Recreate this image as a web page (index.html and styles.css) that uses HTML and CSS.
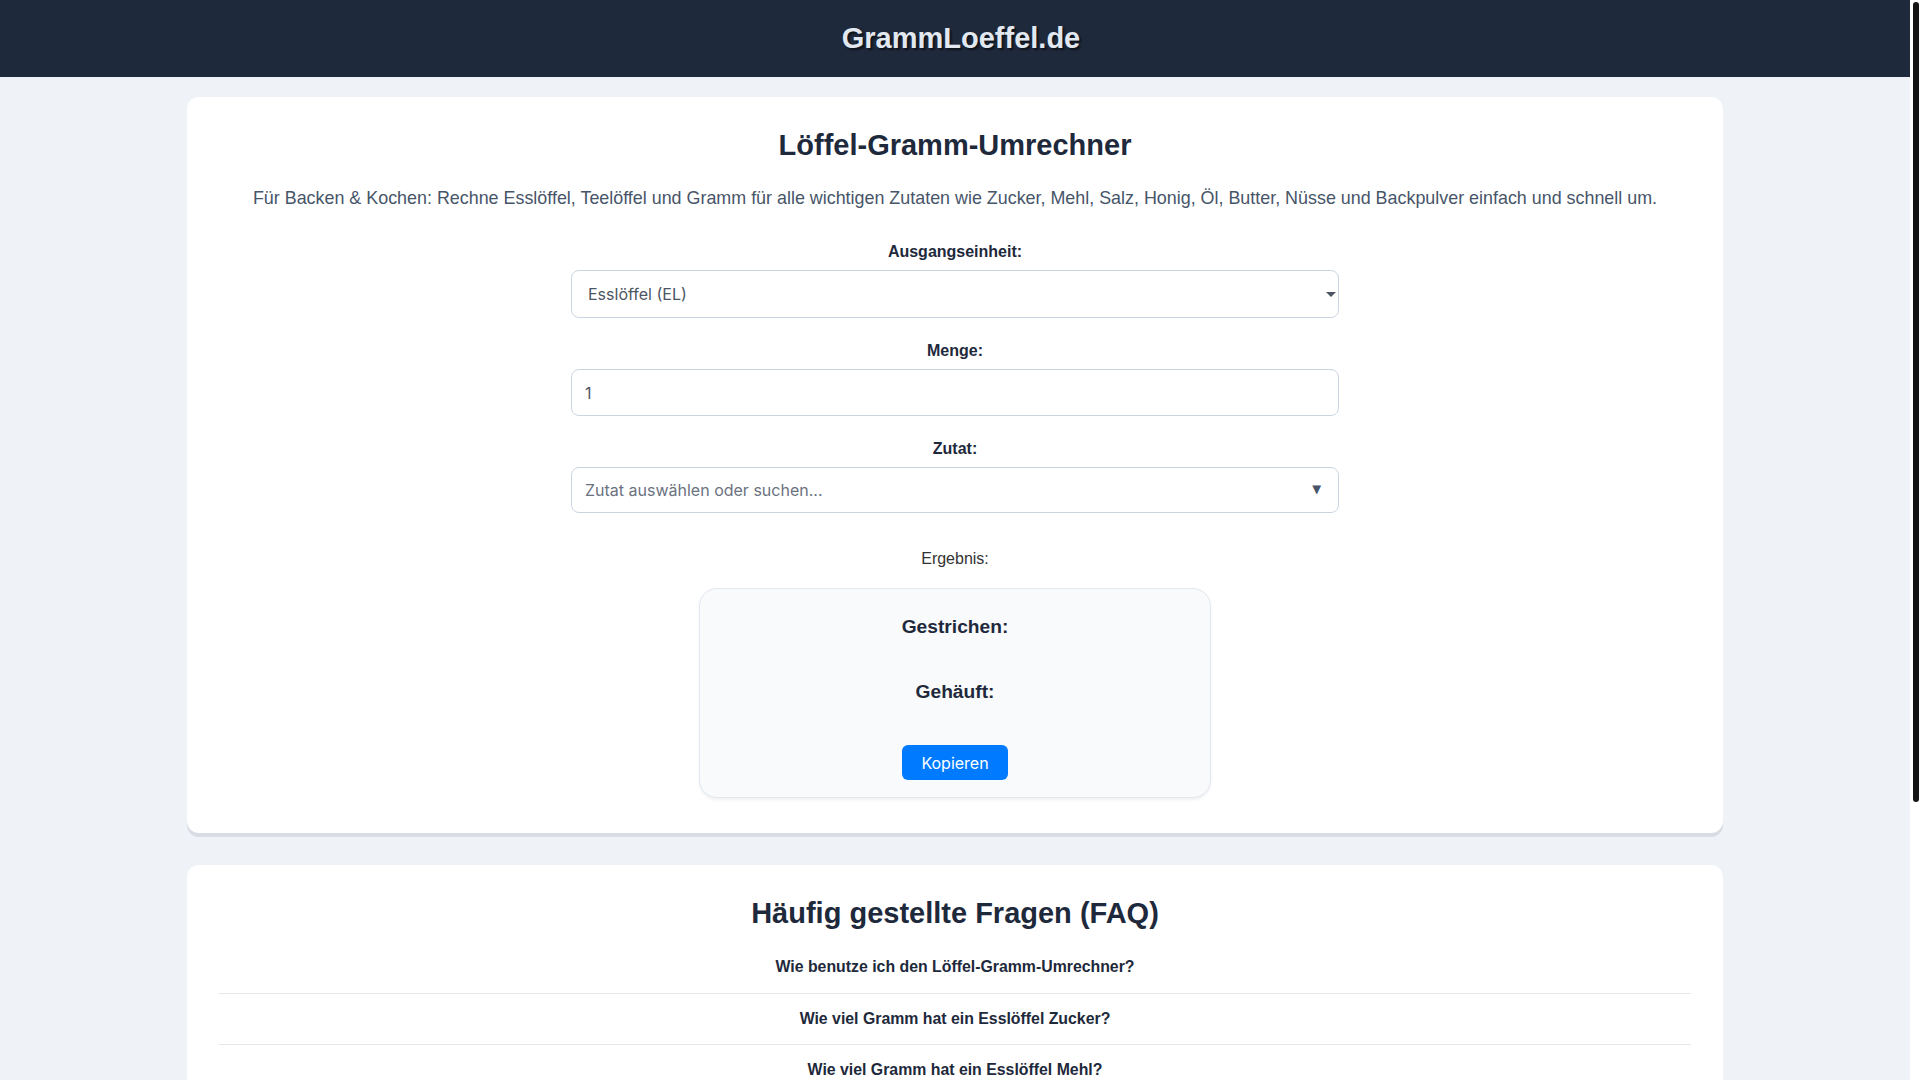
FILE: index.html
```html
<!DOCTYPE html>
<html lang="de">
<head>
<meta charset="utf-8">
<title>GrammLoeffel.de – Löffel-Gramm-Umrechner</title>
<link rel="stylesheet" href="styles.css">
</head>
<body>
<header class="site-header">
  <div class="site-title">GrammLoeffel.de</div>
</header>

<main class="container">
  <section class="card converter">
    <h1 class="card-title">Löffel-Gramm-Umrechner</h1>
    <p class="subtitle">Für Backen &amp; Kochen: Rechne Esslöffel, Teelöffel und Gramm für alle wichtigen Zutaten wie Zucker, Mehl, Salz, Honig, Öl, Butter, Nüsse und Backpulver einfach und schnell um.</p>

    <form class="form">
      <div class="group">
        <label class="label" for="unit">Ausgangseinheit:</label>
        <div class="select-wrap">
          <select id="unit" class="field field-select">
            <option>Esslöffel (EL)</option>
            <option>Teelöffel (TL)</option>
            <option>Gramm (g)</option>
          </select>
          <span class="select-arrow" aria-hidden="true"></span>
        </div>
      </div>

      <div class="group">
        <label class="label" for="amount">Menge:</label>
        <input id="amount" class="field field-input" type="text" value="1">
      </div>

      <div class="group">
        <label class="label" for="ingredient">Zutat:</label>
        <div class="combo-wrap">
          <input id="ingredient" class="field field-combo" type="text" placeholder="Zutat auswählen oder suchen...">
          <span class="combo-arrow" aria-hidden="true">▼</span>
        </div>
      </div>

      <div class="result-label">Ergebnis:</div>
      <div class="result-box">
        <div class="result-line">Gestrichen:</div>
        <div class="result-line second">Gehäuft:</div>
        <button type="button" class="copy-btn">Kopieren</button>
      </div>
    </form>
  </section>

  <section class="card faq">
    <h2 class="card-title faq-title">Häufig gestellte Fragen (FAQ)</h2>
    <details class="faq-item"><summary>Wie benutze ich den Löffel-Gramm-Umrechner?</summary></details>
    <details class="faq-item"><summary>Wie viel Gramm hat ein Esslöffel Zucker?</summary></details>
    <details class="faq-item"><summary>Wie viel Gramm hat ein Esslöffel Mehl?</summary></details>
  </section>
</main>

<div class="scrollbar" aria-hidden="true"><div class="scrollbar-thumb"></div></div>
</body>
</html>
```

FILE: styles.css
```css
html {
  background: #eff3f8;
}

body {
  margin: 0 10px 0 0;
  background: #eff3f8;
  font-family: "Liberation Sans", Arial, sans-serif;
  color: #1e293b;
}

.scrollbar {
  position: fixed;
  top: 0;
  right: 0;
  width: 10px;
  height: 100vh;
  background: #ffffff;
}

.scrollbar-thumb {
  position: absolute;
  top: 2px;
  left: 3px;
  width: 6px;
  height: 800px;
  border-radius: 3px;
  background: #141414;
}

.site-header {
  background: #1e293b;
  height: 77px;
  display: flex;
  align-items: center;
  justify-content: center;
  padding-left: 12px;
}

.site-title {
  font-size: 29px;
  font-weight: bold;
  color: #e2e8f0;
  text-shadow: 2px 2px 2px rgba(0, 0, 0, 0.55);
}

.container {
  max-width: 1536px;
  margin: 20px auto 0;
  padding-bottom: 20px;
}

.card {
  background: #ffffff;
  border-radius: 12px;
  padding: 32px 32px 35px;
  box-shadow: 0 4px 0 #d9dce2;
  margin-bottom: 32px;
}

.card-title {
  margin: 0 0 26px;
  font-size: 29px;
  font-weight: bold;
  text-align: center;
  color: #1e293b;
}

.subtitle {
  margin: 0 0 35px;
  font-size: 17.9px;
  line-height: 20.2px;
  text-align: center;
  color: #475569;
}

.form {
  max-width: 768px;
  margin: 0 auto;
}

.group {
  margin-bottom: 24px;
}

.label {
  display: block;
  font-size: 16px;
  line-height: 18px;
  font-weight: bold;
  text-align: center;
  margin-bottom: 9px;
  color: #1e293b;
}

.field {
  display: block;
  box-sizing: border-box;
  width: 100%;
  margin: 0;
  border: 1px solid #cbd5e1;
  border-radius: 8px;
  background: #ffffff;
  font-family: Inter, "Liberation Sans", sans-serif;
  font-size: 16px;
  color: #4b5563;
  outline: none;
}

.select-wrap,
.combo-wrap {
  position: relative;
}

.field-select {
  appearance: none;
  -webkit-appearance: none;
  height: 48px;
  padding: 0 30px 0 16px;
}

.select-arrow {
  position: absolute;
  right: 3px;
  top: 22px;
  width: 0;
  height: 0;
  border-left: 5px solid transparent;
  border-right: 5px solid transparent;
  border-top: 5px solid #4b5563;
}

.field-input {
  height: 47px;
  padding: 0 14px 0 13px;
}

.field-combo {
  height: 46px;
  padding: 0 40px 0 13px;
}

.field-combo::placeholder {
  color: #6b7280;
  opacity: 1;
}

.combo-arrow {
  position: absolute;
  right: 18px;
  top: 14px;
  font-family: "DejaVu Sans", sans-serif;
  font-size: 11.5px;
  line-height: 16px;
  color: #475569;
  pointer-events: none;
}

.result-label {
  margin-top: 37px;
  font-size: 16px;
  line-height: 18px;
  text-align: center;
  color: #333333;
}

.result-box {
  box-sizing: border-box;
  width: 512px;
  height: 210px;
  margin: 20px auto 0;
  padding: 27px 16px 17px;
  background: #f8fafc;
  border: 1px solid #e2e8f0;
  border-radius: 18px;
  box-shadow: 0 2px 3px rgba(0, 0, 0, 0.06);
  display: flex;
  flex-direction: column;
  align-items: center;
}

.result-line {
  font-size: 19.2px;
  line-height: 22px;
  font-weight: bold;
  color: #1e293b;
}

.result-line.second {
  margin-top: 43px;
}

.copy-btn {
  margin-top: 42px;
  height: 35px;
  padding: 0 19px;
  border: none;
  border-radius: 6px;
  background: #007bff;
  color: #ffffff;
  font-family: Inter, "Liberation Sans", sans-serif;
  font-size: 16px;
  cursor: pointer;
}

.faq-title {
  margin-bottom: 12px;
}

.faq-item {
  border-bottom: 1px solid #e5e7eb;
}

.faq-item summary {
  list-style: none;
  padding: 16px 0;
  font-size: 15.85px;
  line-height: 18.4px;
  font-weight: bold;
  text-align: center;
  color: #1e293b;
  cursor: pointer;
}

.faq-item summary::-webkit-details-marker {
  display: none;
}
```
